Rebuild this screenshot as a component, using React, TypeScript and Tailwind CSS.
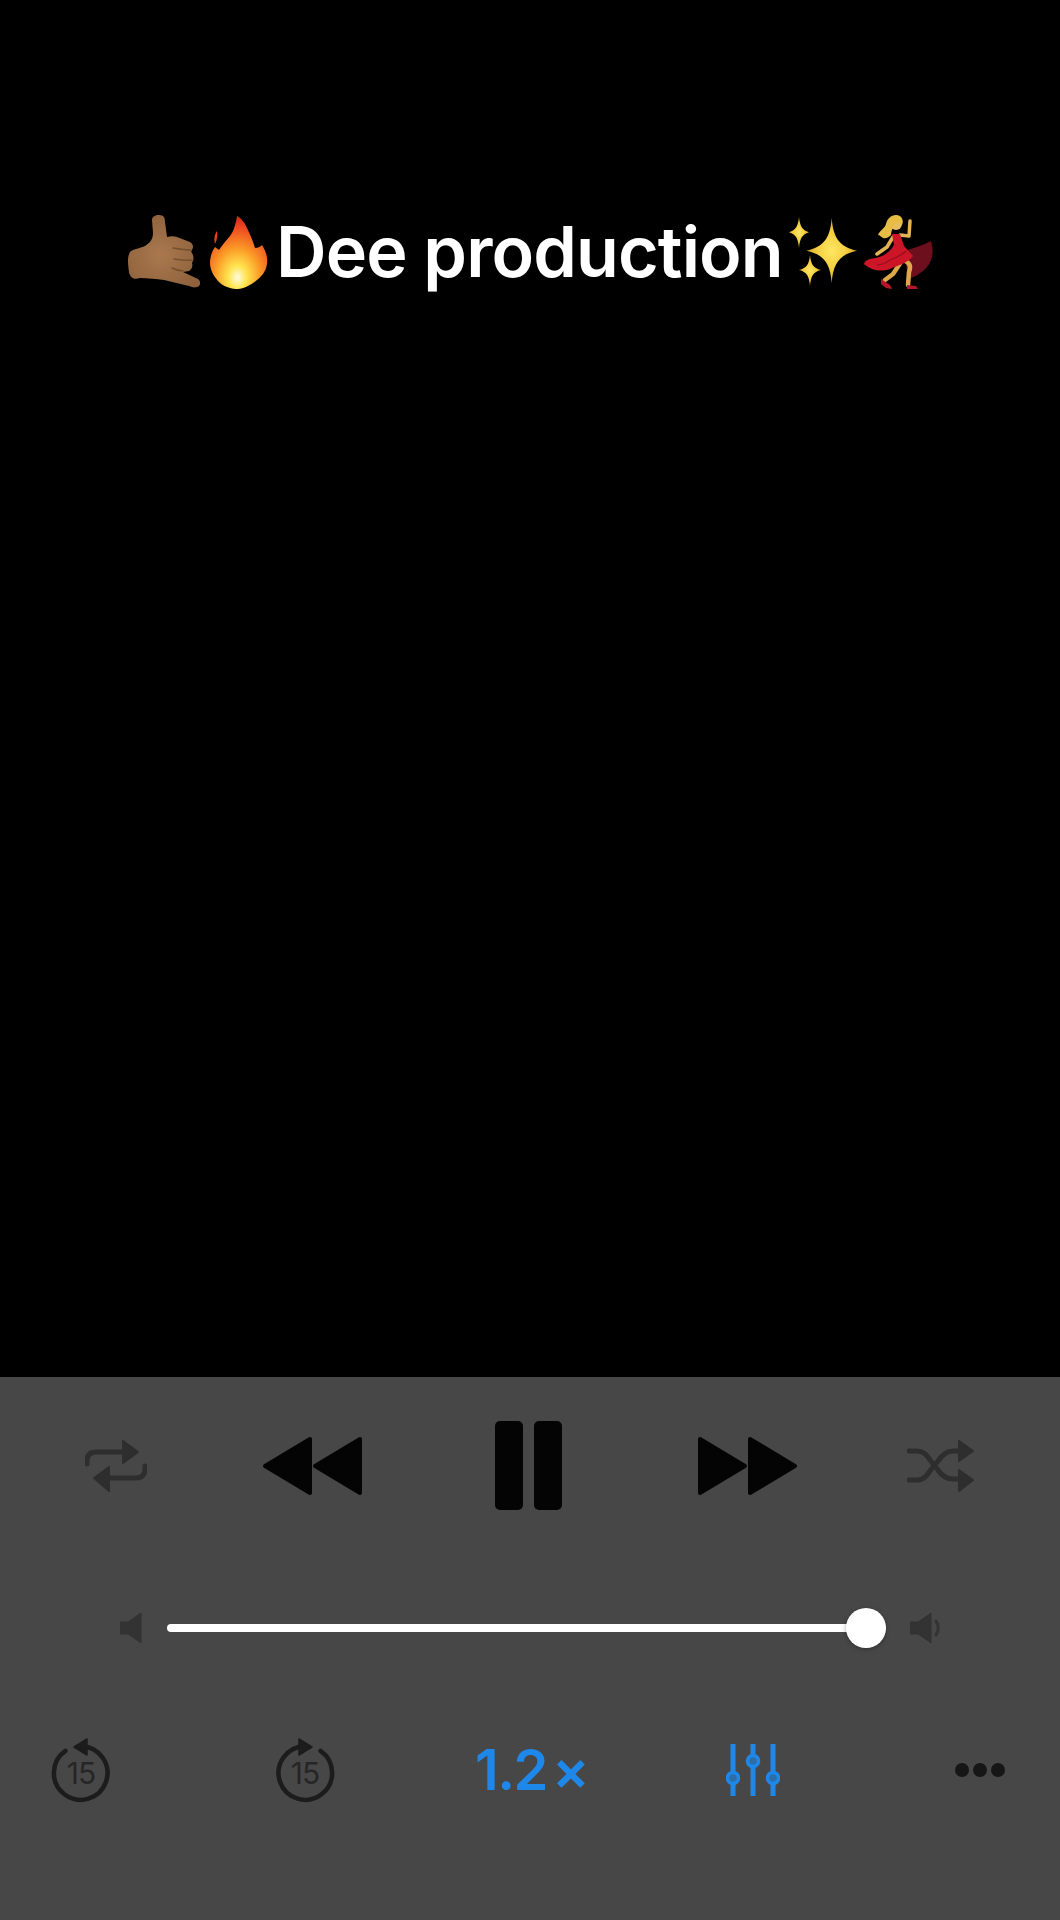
import React from "react";

function Shaka() {
  return (
    <svg width="73" height="74" viewBox="0 0 73 74" className="shrink-0">
      <defs>
        <radialGradient id="sk" cx="0.45" cy="0.55" r="0.6">
          <stop offset="0" stopColor="#a9784e" />
          <stop offset="1" stopColor="#8f623c" />
        </radialGradient>
      </defs>
      <path d="M31 0c5 0 6 3 6 7l2 15c4-1 7-1 10 0l13 5c3 2 4 5 2 8-1 1-1 2 0 3 2 3 2 7 0 10 1 3 0 6-3 8l-6 1 15 7c3 2 3 7-1 8-3 1-5 0-8-1l-25-6c-8-1-16-2-24-2-6 2-10 0-11-6C0 49-1 42 2 37c3-3 8-3 15-6 5-3 8-7 8-13l-1-13c0-3 3-5 7-5z" fill="url(#sk)" />
      <path d="M45 33c6 1 12 2 18 2M46 44c6 1 12 2 18 1M44 53c4 2 7 3 11 3" stroke="#75502f" strokeWidth="1.500" fill="none" strokeLinecap="round" />
    </svg>
  );
}

function Fire() {
  return (
    <svg width="58" height="76" viewBox="0 0 58 76" className="shrink-0">
      <defs>
        <radialGradient id="ff" cx="0.48" cy="0.84" r="0.8">
          <stop offset="0" stopColor="#fffbe0" />
          <stop offset="0.2" stopColor="#ffe44f" />
          <stop offset="0.5" stopColor="#fb9a26" />
          <stop offset="0.85" stopColor="#ee4a22" />
          <stop offset="1" stopColor="#d9301a" />
        </radialGradient>
      </defs>
      <path d="M27 2c4 2 8 7 10 12 3 6 6 13 8 20 3 0 5-1 7-3 4 6 6 13 5 19-1 7-5 12-10 16-6 5-13 9-19 9-6 0-13-2-18-6-6-6-10-13-10-20 0-6 2-12 5-16 1 1 3 2 4 3 3-5 7-9 11-14 4-5 6-13 7-20z" fill="url(#ff)" />
      <path d="M7 17c1 4 0 9-2 13-1-4-1-9 2-13z" fill="#e8401f" />
    </svg>
  );
}

function Sparkles() {
  return (
    <svg width="68" height="70" viewBox="0 0 68 70" className="shrink-0">
      <defs>
        <radialGradient id="sp" cx="0.5" cy="0.5" r="0.55">
          <stop offset="0" stopColor="#ffe763" />
          <stop offset="0.55" stopColor="#f3cc3e" />
          <stop offset="1" stopColor="#c8981f" />
        </radialGradient>
      </defs>
      <path d="M10 0c1 9 3 13 10 15.300-7 2.300-9 6-10 15.700-1-9.700-3-13.400-10-15.700 7-2.300 9-6.300 10-15.300z" fill="url(#sp)" />
      <path d="M42.700 1c1.500 20 8 29 25.300 32.700-17.300 3.700-23.800 12.300-25.300 32.300-1.500-20-8-28.600-25.300-32.300C34.700 30 41.200 21 42.700 1z" fill="url(#sp)" />
      <path d="M21 38c1 9 3 13 11 15-8 2-10 6-11 16-1-10-3-14-11-16 8-2 10-6 11-15z" fill="url(#sp)" />
    </svg>
  );
}

function Dancer() {
  return (
    <svg width="70" height="76" viewBox="0 0 70 76" fill="none" className="shrink-0">
      <path d="M41 37c9-3 18-5 27-10 3 9 2 19-4 26-6 7-13 10-19 12-1-10-3-19-4-28z" fill="#6d0f1c" />
      <path d="M42 47c5 2 6 6 4 11l-1 13" stroke="#dca84a" strokeWidth="4.500" strokeLinecap="round" strokeLinejoin="round" />
      <path d="M38 48L30 60 22 66" stroke="#dca84a" strokeWidth="4.500" strokeLinecap="round" strokeLinejoin="round" />
      <path d="M18 65l9 6 2 4-6-1-5-4zM44 71l9 1 2 3-11 0z" fill="#b3182a" />
      <path d="M37 21l9 1 1-15" stroke="#e3b354" strokeWidth="3.500" strokeLinecap="round" strokeLinejoin="round" />
      <path d="M30 23l-6 10-10 7" stroke="#e3b354" strokeWidth="3.500" strokeLinecap="round" strokeLinejoin="round" />
      <circle cx="33" cy="10" r="6" fill="#e8bd62" />
      <path d="M33 1c-5 0-9 4-10 9-1 4-6 6-8 11 2 0 3 2 5 3 3 1 6-1 8-3 0-4 2-8 4-11 3-1 5-1 7 1 2-4 0-10-6-10z" fill="#e7bd45" />
      <path d="M29 20h8l4 12 9 10c-6 8-15 9-23 13-9 3-18 2-26-5 1-4 5-5 11-6 8-1 15-6 19-13z" fill="#cc1526" />
      <path d="M27 46c5-2 11-4 16-9M14 51c5 0 9-2 13-5" stroke="#9c0f20" strokeWidth="1.500" />
    </svg>
  );
}

function Rewind({ flip }: { flip?: boolean }) {
  return (
    <svg width="100" height="60" viewBox="0 0 100 60" className={flip ? "-scale-x-100 shrink-0" : "shrink-0"}>
      <path d="M48 3L3 30l45 27zM98 3L53 30l45 27z" fill="#040404" stroke="#040404" strokeWidth="4" strokeLinejoin="round" />
    </svg>
  );
}

function Repeat() {
  return (
    <svg width="62" height="52" viewBox="0 0 62 52" fill="none" className="shrink-0">
      <path d="M2 24v-3c0-6 3-9 9-9h28" stroke="#2e2e2e" strokeWidth="5" strokeLinecap="round" />
      <path d="M60 26v3c0 6-3 9-9 9H22" stroke="#2e2e2e" strokeWidth="5" strokeLinecap="round" />
      <path d="M38 1l15 11-15 11z" fill="#2e2e2e" stroke="#2e2e2e" strokeWidth="2" strokeLinejoin="round" />
      <path d="M24 27L9 38l15 13z" fill="#2e2e2e" stroke="#2e2e2e" strokeWidth="2" strokeLinejoin="round" />
    </svg>
  );
}

function Shuffle() {
  return (
    <svg width="68" height="54" viewBox="0 0 68 54" fill="none" className="shrink-0">
      <path d="M2 12h8c6 0 9 3 13 9l8 10c4 6 8 9 15 9h6" stroke="#2e2e2e" strokeWidth="5" strokeLinecap="round" />
      <path d="M2 41h8c6 0 9-3 13-9l8-10c4-6 8-10 15-10h6" stroke="#2e2e2e" strokeWidth="5" strokeLinecap="round" />
      <path d="M52 2l14 10-14 10zM52 31l14 10-14 11z" fill="#2e2e2e" stroke="#2e2e2e" strokeWidth="2" strokeLinejoin="round" />
    </svg>
  );
}

function Speaker({ wave }: { wave?: boolean }) {
  return (
    <svg width={wave ? 30 : 22} height="32" viewBox={wave ? "0 0 30 32" : "0 0 22 32"} fill="none" className="shrink-0">
      <path d="M0 10h8L21 1v30L8 22H0z" fill="#333" stroke="#333" strokeLinejoin="round" />
      {wave && <path d="M26 9c3 4 3 10 0 14" stroke="#333" strokeWidth="3" strokeLinecap="round" />}
    </svg>
  );
}

function Skip({ forward }: { forward?: boolean }) {
  return (
    <div className="relative w-[58px] h-[64px] shrink-0">
      <svg width="58" height="64" viewBox="0 0 58 64" fill="none" overflow="visible" className={forward ? "-scale-x-100" : ""}>
        <path d="M13.500 12.900A26.800 26.800 0 1 0 29 8.200" stroke="#1c1c1c" strokeWidth="4.500" strokeLinecap="round" />
        <path d="M35 1v16L22 9z" fill="#1c1c1c" stroke="#1c1c1c" strokeWidth="1.500" strokeLinejoin="round" />
      </svg>
      <span className="absolute left-0 right-0 top-[19px] text-center text-[30px] leading-[32px] tracking-[-1px] text-[#262626]">15</span>
    </div>
  );
}

function Sliders() {
  return (
    <svg width="54" height="52" viewBox="0 0 54 52" fill="none" className="shrink-0">
      <g stroke="#1e88ea" strokeWidth="5">
        <path d="M7 0v28M7 40v12M27 0v11M27 23v29M47 0v28M47 40v12" />
        <circle cx="7" cy="34" r="5.500" strokeWidth="3.500" fill="#2b6ea8" />
        <circle cx="27" cy="17" r="5.500" strokeWidth="3.500" fill="#2b6ea8" />
        <circle cx="47" cy="34" r="5.500" strokeWidth="3.500" fill="#2b6ea8" />
      </g>
    </svg>
  );
}

export default function App() {
  return (
    <div className="w-[1060px] h-[1920px] flex flex-col bg-black font-['Inter',sans-serif]">
      <div className="h-[1377px] flex items-start pt-[213px] pl-[128px]">
        <div className="flex items-center">
          <Shaka />
          <div className="ml-[9px]"><Fire /></div>
          <span className="ml-[8px] w-[513px] shrink-0 text-[70px] leading-[78px] font-semibold tracking-[-0.9px] text-white whitespace-nowrap">Dee production</span>
          <Sparkles />
          <div className="ml-[6px]"><Dancer /></div>
        </div>
      </div>
      <div className="flex-1 bg-[#474747] flex flex-col">
        <div className="flex items-center mt-[44px] pl-[85px]">
          <Repeat />
          <div className="ml-[115px]"><Rewind /></div>
          <div className="ml-[133px] flex gap-[11px]">
            <div className="w-[28px] h-[89px] bg-[#040404] rounded-[5px]" />
            <div className="w-[28px] h-[89px] bg-[#040404] rounded-[5px]" />
          </div>
          <div className="ml-[136px]"><Rewind flip /></div>
          <div className="ml-[109px]"><Shuffle /></div>
        </div>
        <div className="flex items-center mt-[102px] pl-[120px]">
          <Speaker />
          <div className="ml-[25px] w-[719px] h-[8px] bg-white rounded-full relative">
            <div className="absolute right-0 top-[-16px] w-[40px] h-[40px] rounded-full bg-white shadow-[0_1px_4px_rgba(0,0,0,0.35)]" />
          </div>
          <div className="ml-[24px]"><Speaker wave /></div>
        </div>
        <div className="flex items-center mt-[94px] pl-[52px]">
          <Skip />
          <div className="ml-[166px]"><Skip forward /></div>
          <div className="ml-[141px] w-[108px] flex items-baseline text-[#1e88ea] whitespace-nowrap">
            <span className="text-[56px] leading-[64px] font-semibold tracking-[-1.5px]">1.2</span>
            <span className="ml-[5px] text-[56px] leading-[64px] font-semibold">×</span>
          </div>
          <div className="ml-[143px]"><Sliders /></div>
          <div className="ml-[175px] flex gap-[4px]">
            <div className="w-[14px] h-[14px] rounded-full bg-[#161616]" />
            <div className="w-[14px] h-[14px] rounded-full bg-[#161616]" />
            <div className="w-[14px] h-[14px] rounded-full bg-[#161616]" />
          </div>
        </div>
      </div>
    </div>
  );
}
